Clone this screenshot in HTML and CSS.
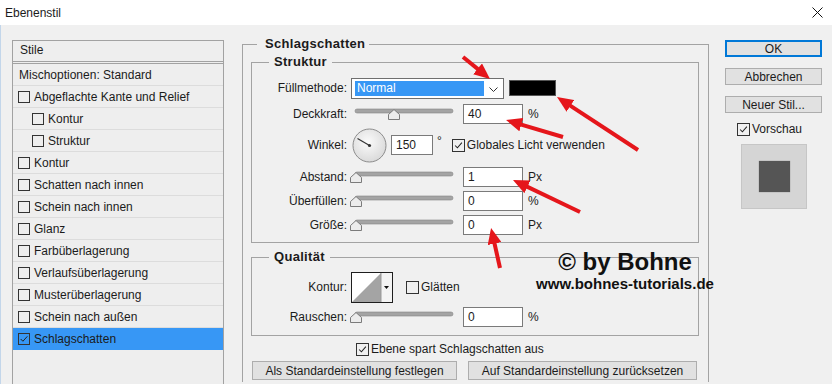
FILE: index.html
```html
<!DOCTYPE html>
<html lang="de">
<head>
  <meta charset="UTF-8">
  <title>Ebenenstil</title>
  <link rel="stylesheet" href="styles.css">
</head>
<body>
  <div class="titlebar">
    <span class="title">Ebenenstil</span>
    <svg class="close" width="11" height="11" viewBox="0 0 11 11">
      <path d="M0.5 0.5 L10.5 10.5 M10.5 0.5 L0.5 10.5" stroke="#111" stroke-width="1"></path>
    </svg>
  </div>

  <div class="dialog">
    <!-- Stilliste links -->
    <div class="styles">
      <div class="styles-head">Stile</div>
      <div class="style-row plain">Mischoptionen: Standard</div>
      <div class="style-row"><span class="box"></span>Abgeflachte Kante und Relief</div>
      <div class="style-row sub"><span class="box"></span>Kontur</div>
      <div class="style-row sub"><span class="box"></span>Struktur</div>
      <div class="style-row"><span class="box"></span>Kontur</div>
      <div class="style-row"><span class="box"></span>Schatten nach innen</div>
      <div class="style-row"><span class="box"></span>Schein nach innen</div>
      <div class="style-row"><span class="box"></span>Glanz</div>
      <div class="style-row"><span class="box"></span>Farbüberlagerung</div>
      <div class="style-row"><span class="box"></span>Verlaufsüberlagerung</div>
      <div class="style-row"><span class="box"></span>Musterüberlagerung</div>
      <div class="style-row"><span class="box"></span>Schein nach außen</div>
      <div class="style-row active">
        <span class="box"><svg viewBox="0 0 12 12"><path d="M2 6 L4.7 8.7 L10 2.8"></path></svg></span>Schlagschatten
      </div>
    </div>

    <!-- Einstellungen -->
    <div class="main">
      <fieldset class="group outer">
        <legend>Schlagschatten</legend>

        <fieldset class="group">
          <legend>Struktur</legend>

          <div class="field">
            <label>Füllmethode:</label>
            <div class="select">
              <span class="select-value">Normal</span>
              <span class="select-btn">
                <svg width="9" height="6" viewBox="0 0 9 6"><path d="M0.5 0.5 L4.5 4.5 L8.5 0.5" fill="none" stroke="#333"></path></svg>
              </span>
            </div>
            <span class="swatch"></span>
          </div>

          <div class="field">
            <label>Deckkraft:</label>
            <svg class="slider" width="106" height="14">
              <rect x="4" y="2" width="98" height="4" rx="2" fill="#a4a4a4" stroke="#858585" stroke-width="0.6"></rect>
              <polygon points="43,2.5 48.5,7.5 48.5,12.5 37.5,12.5 37.5,7.5" fill="#ececec" stroke="#7b7b7b"></polygon>
            </svg>
            <span class="num">40</span>
            <span class="unit">%</span>
          </div>

          <div class="field tall">
            <label>Winkel:</label>
            <svg class="dial" width="35" height="35" viewBox="0 0 35 35">
              <defs>
                <radialGradient id="dialFill" cx="0.45" cy="0.4" r="0.6">
                  <stop offset="0" stop-color="#fbfbfb"></stop>
                  <stop offset="1" stop-color="#dadada"></stop>
                </radialGradient>
              </defs>
              <circle cx="17.5" cy="17.5" r="16.5" fill="url(#dialFill)" stroke="#8c8c8c"></circle>
              <line x1="17.5" y1="17.5" x2="5.5" y2="10.6" stroke="#333" stroke-width="1.2"></line>
              <circle cx="17.5" cy="17.5" r="1.6" fill="#333"></circle>
            </svg>
            <span class="num short">150</span>
            <span class="deg">°</span>
            <span class="cb"><svg viewBox="0 0 13 13"><path d="M2.5 6.5 L5.2 9.2 L10.5 3.2"></path></svg></span>
            <span class="cb-label">Globales Licht verwenden</span>
          </div>

          <div class="field tight">
            <label>Abstand:</label>
            <svg class="slider" width="106" height="14">
              <rect x="4" y="2" width="98" height="4" rx="2" fill="#a4a4a4" stroke="#858585" stroke-width="0.6"></rect>
              <polygon points="5,2.5 10.5,7.5 10.5,12.5 -0.5,12.5 -0.5,7.5" fill="#ececec" stroke="#7b7b7b"></polygon>
            </svg>
            <span class="num">1</span>
            <span class="unit">Px</span>
          </div>

          <div class="field tight">
            <label>Überfüllen:</label>
            <svg class="slider" width="106" height="14">
              <rect x="4" y="2" width="98" height="4" rx="2" fill="#a4a4a4" stroke="#858585" stroke-width="0.6"></rect>
              <polygon points="5,2.5 10.5,7.5 10.5,12.5 -0.5,12.5 -0.5,7.5" fill="#ececec" stroke="#7b7b7b"></polygon>
            </svg>
            <span class="num">0</span>
            <span class="unit">%</span>
          </div>

          <div class="field tight">
            <label>Größe:</label>
            <svg class="slider" width="106" height="14">
              <rect x="4" y="2" width="98" height="4" rx="2" fill="#a4a4a4" stroke="#858585" stroke-width="0.6"></rect>
              <polygon points="5,2.5 10.5,7.5 10.5,12.5 -0.5,12.5 -0.5,7.5" fill="#ececec" stroke="#7b7b7b"></polygon>
            </svg>
            <span class="num">0</span>
            <span class="unit">Px</span>
          </div>
        </fieldset>

        <fieldset class="group quality">
          <legend>Qualität</legend>

          <div class="field contour-row">
            <label>Kontur:</label>
            <svg class="contour" width="42" height="31" viewBox="0 0 42 31">
              <rect x="0.5" y="0.5" width="41" height="30" fill="#fff" stroke="#1e1e1e"></rect>
              <polygon points="1,30 30,1 30,30" fill="#a4a4a4"></polygon>
              <rect x="30" y="1" width="11" height="29" fill="#f4f4f4"></rect>
              <line x1="30" y1="1" x2="30" y2="30" stroke="#9a9a9a"></line>
              <polygon points="33,14 38,14 35.5,17" fill="#111"></polygon>
            </svg>
            <span class="cb glatt"></span>
            <span class="cb-label">Glätten</span>
          </div>

          <div class="field">
            <label>Rauschen:</label>
            <svg class="slider" width="106" height="14">
              <rect x="4" y="2" width="98" height="4" rx="2" fill="#a4a4a4" stroke="#858585" stroke-width="0.6"></rect>
              <polygon points="5,2.5 10.5,7.5 10.5,12.5 -0.5,12.5 -0.5,7.5" fill="#ececec" stroke="#7b7b7b"></polygon>
            </svg>
            <span class="num">0</span>
            <span class="unit">%</span>
          </div>
        </fieldset>

        <div class="knockout">
          <span class="cb"><svg viewBox="0 0 13 13"><path d="M2.5 6.5 L5.2 9.2 L10.5 3.2"></path></svg></span>
          <span class="cb-label">Ebene spart Schlagschatten aus</span>
        </div>

        <div class="defaults">
          <button class="btn wide">Als Standardeinstellung festlegen</button>
          <button class="btn wider">Auf Standardeinstellung zurücksetzen</button>
        </div>
      </fieldset>
    </div>

    <!-- Buttons rechts -->
    <div class="side">
      <button class="btn side-btn ok">OK</button>
      <button class="btn side-btn">Abbrechen</button>
      <button class="btn side-btn">Neuer Stil...</button>
      <div class="preview-check">
        <span class="cb"><svg viewBox="0 0 13 13"><path d="M2.5 6.5 L5.2 9.2 L10.5 3.2"></path></svg></span>
        <span class="cb-label">Vorschau</span>
      </div>
      <div class="preview"><div class="preview-shape"></div></div>
    </div>
  </div>

  <div class="stamp">
    <div class="stamp-big">© by Bohne</div>
    <div class="stamp-url">www.bohnes-tutorials.de</div>
  </div>

  <svg class="arrows" width="832" height="384" viewBox="0 0 832 384">
    <defs>
      <marker id="head" markerUnits="userSpaceOnUse" markerWidth="16" markerHeight="14" viewBox="0 0 16 14" refX="8" refY="7" orient="auto">
        <path d="M0 0 L16 7 L0 14 z" fill="#e5161b"></path>
      </marker>
    </defs>
    <g stroke="#e5161b" stroke-width="4" marker-end="url(#head)">
      <line x1="463" y1="57" x2="483.8" y2="73.9"></line>
      <line x1="638" y1="150" x2="563.7" y2="101.4"></line>
      <line x1="563" y1="137" x2="513.7" y2="122.3"></line>
      <line x1="580" y1="212" x2="520.2" y2="183.4"></line>
      <line x1="500" y1="268" x2="492.8" y2="235.8"></line>
    </g>
  </svg>
</body>
</html>
```

FILE: styles.css
```css
* {
  margin: 0;
  padding: 0;
  box-sizing: border-box;
}

body {
  width: 832px;
  height: 384px;
  overflow: hidden;
  position: relative;
  background-color: #f0f0f0;
  font-family: 'Liberation Sans', Arial, sans-serif;
  font-size: 12px;
  color: #1b1b1b;
}

.titlebar {
  height: 25px;
  background: #fff;
  display: flex;
  align-items: center;
  justify-content: space-between;
  padding: 0 9px 0 5px;
}

.close {
  display: block;
}

.dialog {
  display: flex;
  align-items: flex-start;
  border-left: 1px solid #c3d6ea;
  height: 359px;
  overflow: hidden;
}

/* Stilliste */

.styles {
  margin: 15px 0 0 11px;
  width: 212px;
  height: 344px;
  border: 1px solid #a2a2a2;
  border-bottom: none;
  background: #eeeeee;
  flex-shrink: 0;
}

.styles-head {
  height: 23px;
  line-height: 16px;
  padding: 1px 0 0 7px;
  border-bottom: 3px double #a2a2a2;
}

.style-row {
  height: 22px;
  display: flex;
  align-items: center;
  padding-left: 5px;
  border-bottom: 1px solid #dcdcdc;
}

.style-row.plain {
  padding-left: 6px;
}

.style-row.sub {
  padding-left: 19px;
}

.style-row.active {
  background: #3797f5;
  border-bottom-color: #3797f5;
}

.box {
  width: 12px;
  height: 12px;
  border: 1px solid #333;
  margin-right: 4px;
  display: flex;
}

.box svg,
.cb svg {
  width: 100%;
  height: 100%;
  fill: none;
  stroke: #222;
  stroke-width: 1.2;
}

/* Gruppen */

.main {
  margin: 11px 0 0 18px;
  width: 467px;
  flex-shrink: 0;
}

.group {
  border: 1px solid #a3a3a3;
  min-width: 0;
  padding: 6px 0 5px 0;
  margin: 0 9px 0 8px;
}

.group legend {
  font-size: 13px;
  font-weight: bold;
  letter-spacing: 0.3px;
  line-height: 16px;
  margin-left: 17px;
  padding: 0 5px;
}

.group.outer {
  margin: 0;
  padding: 2px 0 2px 8px;
  border-bottom: none;
}

.group.outer > legend {
  margin-left: 6px;
  padding: 0 4px 0 8px;
}

.group.outer > .group {
  margin-left: 0;
}

.group.quality {
  margin-top: 6px;
  padding-bottom: 6px;
}

.field {
  display: flex;
  align-items: center;
  height: 24px;
}

.field + .field {
  margin-top: 2px;
}

.field.tall {
  height: 34px;
}

.field.tall + .field {
  margin-top: 3px;
}

.field.tight + .field.tight {
  margin-top: 0;
}

.field label {
  width: 95px;
  text-align: right;
  margin-right: 4px;
  flex-shrink: 0;
}

.select {
  width: 153px;
  height: 21px;
  border: 1px solid #6f6f6f;
  background: #fff;
  display: flex;
  align-items: center;
  padding: 2px 0 2px 3px;
}

.select-value {
  width: 129px;
  height: 15px;
  line-height: 15px;
  background: #3797f5;
  color: #fff;
  padding-left: 2px;
}

.select-btn {
  flex: 1;
  height: 19px;
  display: flex;
  align-items: center;
  justify-content: center;
  padding-top: 3px;
}

.swatch {
  width: 47px;
  height: 16px;
  margin-left: 5px;
  background: #000;
  border: 1px solid #555;
}

.slider {
  overflow: visible;
  flex-shrink: 0;
}

.num {
  width: 60px;
  height: 20px;
  margin-left: 6px;
  border: 1px solid #7a7a7a;
  background: #fff;
  padding-left: 4px;
  display: flex;
  align-items: center;
}

.num.short {
  width: 42px;
  margin-left: 4px;
}

.unit {
  margin-left: 5px;
}

.dial {
  margin-left: 1px;
}

.deg {
  margin-left: 4px;
  align-self: flex-start;
  padding-top: 6px;
}

.cb {
  width: 13px;
  height: 13px;
  border: 1px solid #333;
  display: flex;
  flex-shrink: 0;
}

.deg + .cb {
  margin-left: 10px;
}

.cb-label {
  margin-left: 2px;
  white-space: nowrap;
}

.contour-row {
  height: 32px;
}

.contour {
  display: block;
}

.cb.glatt {
  margin-left: 13px;
}

.knockout {
  display: flex;
  align-items: center;
  height: 16px;
  margin: 5px 0 0 105px;
}

.defaults {
  display: flex;
  gap: 11px;
  margin: 4px 0 0 1px;
}

.btn {
  height: 19px;
  background: #e1e1e1;
  border: 1px solid #adadad;
  font-family: inherit;
  font-size: 12px;
  color: #1b1b1b;
}

.btn.wide {
  width: 205px;
}

.btn.wider {
  width: 229px;
}

/* Rechte Spalte */

.side {
  margin: 15px 0 0 16px;
  width: 97px;
  display: flex;
  flex-direction: column;
}

.side-btn {
  width: 97px;
  height: 17px;
  margin-bottom: 11px;
}

.side-btn.ok {
  border-color: #0078d7;
  box-shadow: inset 0 0 0 1px #0078d7;
}

.preview-check {
  display: flex;
  align-items: center;
  height: 16px;
  margin: -3px 0 0 12px;
}

.preview {
  width: 66px;
  height: 65px;
  margin: 7px 0 0 16px;
  background: #d5d5d5;
  border: 1px solid #c6c6c6;
  display: flex;
  align-items: center;
  justify-content: center;
}

.preview-shape {
  width: 31px;
  height: 31px;
  background: #555;
  box-shadow: 0 0 1px #777;
}

/* Wasserzeichen und Pfeile */

.stamp {
  position: absolute;
  left: 525px;
  top: 249px;
  width: 200px;
  text-align: center;
  font-weight: bold;
  color: #111;
}

.stamp-big {
  font-size: 24px;
  line-height: 26px;
}

.stamp-url {
  font-size: 15px;
  line-height: 18px;
}

.arrows {
  position: absolute;
  top: 0;
  left: 0;
  pointer-events: none;
}
```
